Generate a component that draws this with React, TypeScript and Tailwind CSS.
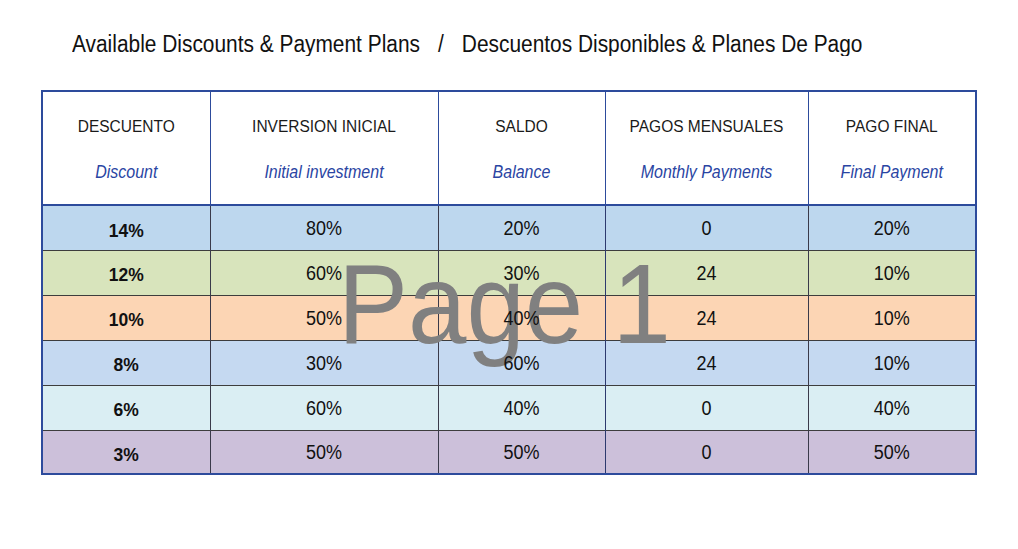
const rows = [
  { d: "14%", inv: "80%", saldo: "20%", pagos: "0", fin: "20%", bg: "bg-[#bdd7ee]", h: "h-[45px]" },
  { d: "12%", inv: "60%", saldo: "30%", pagos: "24", fin: "10%", bg: "bg-[#d8e4bc]", h: "h-[45px]" },
  { d: "10%", inv: "50%", saldo: "40%", pagos: "24", fin: "10%", bg: "bg-[#fcd5b4]", h: "h-[45px]" },
  { d: "8%", inv: "30%", saldo: "60%", pagos: "24", fin: "10%", bg: "bg-[#c5d9f1]", h: "h-[45px]" },
  { d: "6%", inv: "60%", saldo: "40%", pagos: "0", fin: "40%", bg: "bg-[#daeef3]", h: "h-[45px]" },
  { d: "3%", inv: "50%", saldo: "50%", pagos: "0", fin: "50%", bg: "bg-[#ccc0da]", h: "h-[44px]" },
]

const heads = [
  { es: "DESCUENTO", en: "Discount", w: "w-[168px]" },
  { es: "INVERSION INICIAL", en: "Initial investment", w: "w-[228px]" },
  { es: "SALDO", en: "Balance", w: "w-[167px]" },
  { es: "PAGOS MENSUALES", en: "Monthly Payments", w: "w-[203px]" },
  { es: "PAGO FINAL", en: "Final Payment", w: "w-[168px]" },
]

export default function App() {
  return (
    <div className="w-[1018px] h-[549px] bg-white font-['Liberation_Sans',Arial,sans-serif] text-[#111]">
      <h1 className="pt-[26px] pl-[72px] text-[20.9px] leading-[26px] flex gap-[18px] scale-y-[1.12] origin-top">
        <span>Available Discounts &amp; Payment Plans</span>
        <span>/</span>
        <span>Descuentos Disponibles &amp; Planes De Pago</span>
      </h1>

      <div className="relative ml-[41px] mt-[38px] w-[936px]">
        <table className="border-collapse table-fixed w-[936px] border-2 border-[#2d4b9c]">
          <thead>
            <tr className="h-[114px] border-b-2 border-[#2d4b9c]">
              {heads.map((h, i) => (
                <th
                  key={h.es}
                  className={`${h.w} p-0 align-top font-normal ${i > 0 ? "border-l border-[#2d4b9c]" : ""}`}
                >
                  <div className="flex flex-col items-center">
                    <span className="mt-[24px] text-[15.5px] leading-[20px] text-[#1a1a1a] scale-y-[1.12]">{h.es}</span>
                    <span className="mt-[26px] text-[16px] leading-[20px] italic text-[#2a45a3] scale-y-[1.1]">{h.en}</span>
                  </div>
                </th>
              ))}
            </tr>
          </thead>
          <tbody>
            {rows.map((r, ri) => (
              <tr key={r.d} className={`${r.bg} ${r.h} ${ri > 0 ? "border-t border-[#3d3d3d]" : ""}`}>
                <td className="p-0 pt-[4px] text-center text-[17.5px] font-bold">
                  <span className="relative z-10 inline-block scale-y-[1.1]">{r.d}</span>
                </td>
                {[r.inv, r.saldo, r.pagos, r.fin].map((v, i) => (
                  <td key={i} className={`p-0 pt-[4px] text-center text-[18px] border-l ${i === 2 ? "border-[#2d3a6e]" : "border-[#3a3a4a]"}`}>
                    <span className="relative z-10 inline-block scale-y-[1.08]">{v}</span>
                  </td>
                ))}
              </tr>
            ))}
          </tbody>
        </table>

        <div className="absolute left-[297px] top-[149px] z-[5] text-[105px] leading-[120px] text-[#808080] scale-y-[1.08] origin-top-left pointer-events-none">
          Page 1
        </div>
      </div>
    </div>
  )
}
